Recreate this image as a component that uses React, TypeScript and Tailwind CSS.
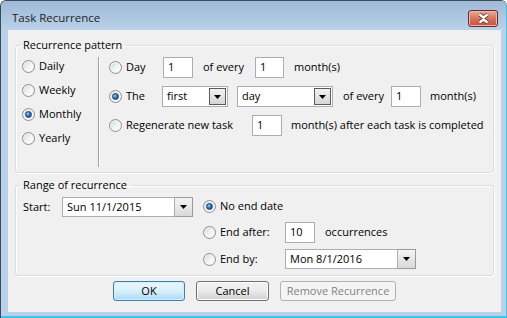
import React from "react";

const font = { fontFamily: '"Segoe UI", "Open Sans", "Noto Sans", sans-serif' };

function Radio({ checked }: { checked?: boolean }) {
  return (
    <span className="relative flex h-[13px] w-[13px] shrink-0 items-center justify-center rounded-full border border-[#8e8f8f] bg-gradient-to-br from-[#d4d4d4] via-[#f2f2f2] to-[#ffffff] shadow-[inset_0_0_0_1px_#f4f4f4]">
      {checked && (
        <span className="h-[7px] w-[7px] rounded-full border border-[#1f3f6a] bg-[radial-gradient(circle_at_35%_35%,#9fd3f7_0%,#2f77c2_45%,#0d3b78_100%)]" />
      )}
    </span>
  );
}

function RadioLabel({ checked, label, width }: { checked?: boolean; label: string; width?: string }) {
  return (
    <label className={`flex items-center gap-[4px] ${width ?? ""}`}>
      <Radio checked={checked} />
      <span>{label}</span>
    </label>
  );
}

function TextBox({ value, width }: { value: string; width: string }) {
  return (
    <div className={`flex h-[21px] ${width} shrink-0 items-center border border-[#abadb3] bg-white pl-[4px]`}>
      {value}
    </div>
  );
}

function Arrow() {
  return (
    <svg width="7" height="4" viewBox="0 0 7 4">
      <path d="M0 0h7L3.5 4z" fill="#000" />
    </svg>
  );
}

function Combo({ value, width, dark }: { value: string; width: string; dark?: boolean }) {
  return (
    <div className={`flex h-[21px] ${width} shrink-0 items-stretch border border-[#abadb3] bg-white`}>
      <div className="flex flex-1 items-center pl-[4px]">{value}</div>
      <div
        className={`flex w-[17px] items-center justify-center bg-gradient-to-b from-[#f2f2f2] to-[#d6d6d6] ${
          dark ? "m-[1px] border border-[#5a5a5a]" : "border-l border-[#abadb3]"
        }`}
      >
        <Arrow />
      </div>
    </div>
  );
}

function DateCombo({ value, width }: { value: string; width: string }) {
  return (
    <div className={`flex h-[20px] ${width} shrink-0 items-stretch`}>
      <div className="flex flex-1 items-center border border-[#abadb3] bg-white pl-[4px]">{value}</div>
      <div className="flex w-[18px] items-center justify-center border border-l-0 border-[#9a9a9a] bg-gradient-to-b from-[#f4f4f4] to-[#d9d9d9]">
        <Arrow />
      </div>
    </div>
  );
}

function Group({ title, children, className }: { title: string; children: React.ReactNode; className?: string }) {
  return (
    <fieldset
      className={`rounded-[3px] border border-[#d5dfe5] shadow-[inset_1px_1px_0_#ffffff,1px_1px_0_#ffffff] ${className ?? ""}`}
    >
      <legend className="ml-[4px] px-[3px] leading-[14px]">{title}</legend>
      {children}
    </fieldset>
  );
}

export default function App() {
  return (
    <div
      style={font}
      className="relative flex h-[318px] w-[507px] flex-col overflow-hidden rounded-tl-[6px] rounded-tr-[6px] border-l border-t border-[#3d4a58] bg-[#b9d1ea] text-[11px] text-black"
    >
      {/* Title bar */}
      <div className="flex h-[29px] shrink-0 items-center justify-between bg-gradient-to-b from-[#9fb9d6] to-[#b9d1ea] pl-[11px] pr-[9px]">
        <span className="mt-[5px] text-[11.5px] text-[#1e1e1e]">Task Recurrence</span>
        <div className="mt-[6px] flex h-[17px] w-[30px] items-center justify-center rounded-[3px] border border-[#6b2b25] bg-gradient-to-b from-[#e9a99b] via-[#d7735f] to-[#c7503a] shadow-[inset_0_0_0_1px_#eab8ad]">
          <svg width="13" height="11" viewBox="0 0 13 11">
            <path d="M2.5 1.5l4 3L10.5 1.5M2.5 9.5l4-3L10.5 9.5" stroke="#5a2a24" strokeWidth="4" fill="none" />
            <path d="M2.5 1.5l4 3L10.5 1.5M2.5 9.5l4-3L10.5 9.5" stroke="#ffffff" strokeWidth="2.4" fill="none" />
          </svg>
        </div>
      </div>

      {/* Body */}
      <div className="flex flex-1 pb-[6px] pl-[7px] pr-[6px]">
        <div className="flex flex-1 flex-col bg-[#f0f0f0] px-[7px] pt-[8px]">
          {/* Recurrence pattern */}
          <Group title="Recurrence pattern">
            <div className="flex pb-[5px] pt-[2px]">
              <div className="flex w-[82px] flex-col pl-[6px]">
                <div className="flex h-[24px] items-center">
                  <RadioLabel label="Daily" />
                </div>
                <div className="flex h-[24px] items-center">
                  <RadioLabel label="Weekly" />
                </div>
                <div className="flex h-[24px] items-center">
                  <RadioLabel label="Monthly" checked />
                </div>
                <div className="flex h-[24px] items-center">
                  <RadioLabel label="Yearly" />
                </div>
              </div>
              <div className="mt-[3px] h-[110px] w-[2px] border-l border-r border-l-[#a0a0a0] border-r-white" />
              <div className="mt-[3px] flex flex-col gap-[8px] pl-[9px]">
                <div className="flex h-[21px] items-center">
                  <RadioLabel label="Day" width="w-[54px]" />
                  <TextBox value="1" width="w-[30px]" />
                  <span className="ml-[10px] w-[52px]">of every</span>
                  <TextBox value="1" width="w-[29px]" />
                  <span className="ml-[10px]">month(s)</span>
                </div>
                <div className="flex h-[21px] items-center">
                  <RadioLabel label="The" checked width="w-[53px]" />
                  <Combo value="first" width="w-[66px]" dark />
                  <div className="ml-[9px]">
                    <Combo value="day" width="w-[96px]" dark />
                  </div>
                  <span className="ml-[10px] w-[48px]">of every</span>
                  <TextBox value="1" width="w-[30px]" />
                  <span className="ml-[9px]">month(s)</span>
                </div>
                <div className="flex h-[21px] items-center">
                  <RadioLabel label="Regenerate new task" width="w-[143px]" />
                  <TextBox value="1" width="w-[30px]" />
                  <span className="ml-[9px]">month(s) after each task is completed</span>
                </div>
              </div>
            </div>
          </Group>

          {/* Range of recurrence */}
          <Group title="Range of recurrence" className="mt-[5px]">
            <div className="flex pb-[6px] pl-[7px] pt-[4px]">
              <div className="flex h-[22px] items-center">
                <span className="w-[39px]">Start:</span>
                <DateCombo value="Sun 11/1/2015" width="w-[131px]" />
              </div>
              <div className="ml-[10px] flex flex-col">
                <div className="flex h-[20px] items-center">
                  <RadioLabel label="No end date" checked />
                </div>
                <div className="mt-[6px] flex h-[20px] items-center">
                  <RadioLabel label="End after:" width="w-[82px]" />
                  <TextBox value="10" width="w-[30px]" />
                  <span className="ml-[10px]">occurrences</span>
                </div>
                <div className="mt-[7px] flex h-[20px] items-center">
                  <RadioLabel label="End by:" width="w-[82px]" />
                  <DateCombo value="Mon 8/1/2016" width="w-[131px]" />
                </div>
              </div>
            </div>
          </Group>

          {/* Buttons */}
          <div className="mt-[5px] flex justify-center gap-[11px]">
            <button className="h-[20px] w-[72px] rounded-[3px] border border-[#3c7fb1] bg-gradient-to-b from-[#eaf6fd] via-[#d9f0fc] to-[#a7d9f5] shadow-[inset_0_0_0_1px_#d6eefb]">
              OK
            </button>
            <button className="h-[20px] w-[73px] rounded-[3px] border border-[#707070] bg-gradient-to-b from-[#f2f2f2] via-[#ebebeb] to-[#cfcfcf] shadow-[inset_0_0_0_1px_#fcfcfc]">
              Cancel
            </button>
            <button className="h-[20px] w-[116px] rounded-[3px] border border-[#adb2b5] bg-[#f4f4f4] text-[#838383]">
              Remove Recurrence
            </button>
          </div>
        </div>
      </div>
      <div className="absolute bottom-0 left-0 h-[2px] w-full bg-[#3ec6e6]" />
      <div className="absolute right-0 top-[4px] h-full w-[1px] bg-[#3ec6e6]" />
    </div>
  );
}
